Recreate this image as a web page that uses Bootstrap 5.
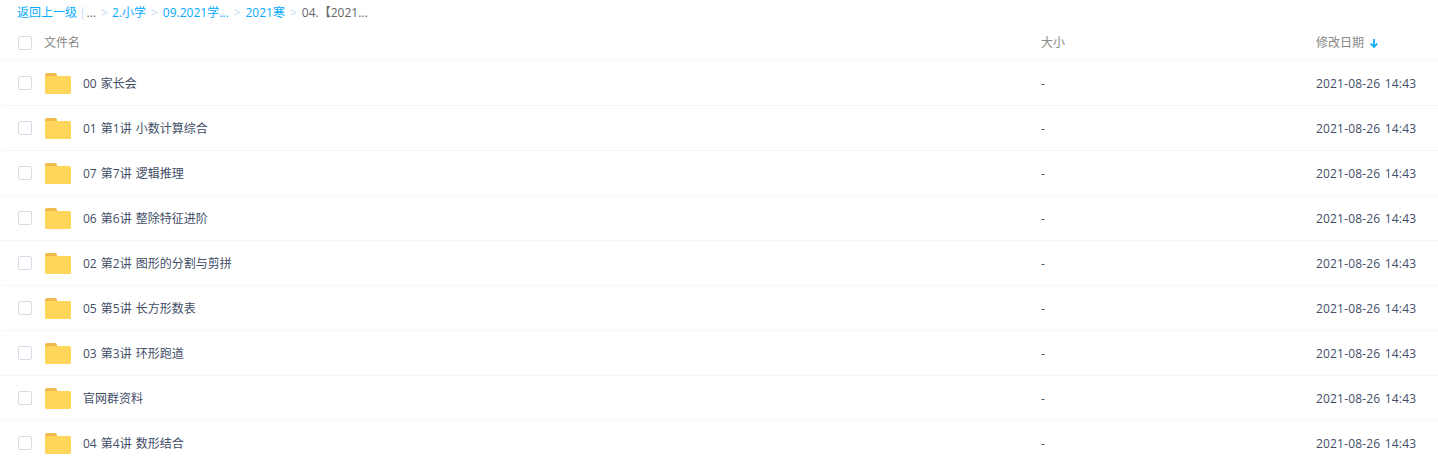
<!DOCTYPE html>
<html lang="zh-CN">
<head>
    <meta charset="UTF-8"/>
    <title>文件列表</title>
    <link rel="stylesheet" href="https://cdn.jsdelivr.net/npm/bootstrap@5.3.0/dist/css/bootstrap.min.css">
    <style>
        body {
            background: #fff;
            font-family: "Open Sans", "Noto Sans CJK SC", sans-serif;
            font-size: 12px;
            color: #424e67;
            overflow: hidden;
        }

        .crumbs {
            height: 25px;
            padding-left: 17px;
            line-height: 26px;
            color: #666;
            white-space: nowrap;
        }

        .crumbs a {
            color: #09aaff;
            text-decoration: none;
        }

        .crumbs .sep {
            color: #c5d8f3;
            margin: 0 5px;
        }

        .crumbs .bar {
            color: #c4d8f4;
            margin: 0 1px 0 2px;
        }

        .crumbs .sep-first {
            margin-right: 4px;
        }

        .file-row {
            height: 45px;
            margin-left: 2px;
            padding-left: 16px;
            border-bottom: 1px solid #f2f6fd;
        }

        .file-head {
            height: 36px;
            color: #888;
        }

        .file-head .name-cell {
            padding-left: 12px;
            width: 1009px;
        }

        .file-head .cell-text {
            padding-top: 0;
        }

        .tick {
            width: 14px;
            height: 14px;
            flex: none;
            border: 1px solid #d5dce6;
            border-radius: 2px;
            background: #fff;
        }

        .name-cell {
            flex: none;
            width: 1009px;
            padding-left: 13px;
        }

        .name-cell svg {
            flex: none;
            margin-top: 1px;
            margin-right: 12px;
        }

        .size-cell {
            flex: none;
            width: 275px;
        }

        .cell-text {
            padding-top: 2px;
            word-spacing: 1px;
        }

        .date-text {
            letter-spacing: .18px;
        }

        .sort-arrow {
            margin-left: 2px;
            margin-top: 1px;
        }
    </style>
</head>
<body>

<div class="crumbs">
    <a href="#">返回上一级</a><span class="bar">|</span>...<span class="sep sep-first">&gt;</span><a href="#">2.小学</a><span class="sep">&gt;</span><a href="#">09.2021学...</a><span class="sep">&gt;</span><a href="#">2021寒</a><span class="sep">&gt;</span>04.【2021...
</div>

<div class="file-row file-head d-flex align-items-center">
    <span class="tick"></span>
    <div class="name-cell cell-text">文件名</div>
    <div class="size-cell cell-text">大小</div>
    <div class="cell-text d-flex align-items-center gap-1">修改日期
        <svg class="sort-arrow" width="8" height="9" viewBox="0 0 8 9"><path d="M4 0V7.5M.8 4.6L4 8L7.2 4.6" fill="none" stroke="#09aaff" stroke-width="1.8"/></svg>
    </div>
</div>

<div id="fileList"></div>

<script>
    const files = [
        '00 家长会',
        '01 第1讲 小数计算综合',
        '07 第7讲 逻辑推理',
        '06 第6讲 整除特征进阶',
        '02 第2讲 图形的分割与剪拼',
        '05 第5讲 长方形数表',
        '03 第3讲 环形跑道',
        '官网群资料',
        '04 第4讲 数形结合'
    ];

    const folderIcon = `<svg width="26" height="21" viewBox="0 0 26 21">
        <path d="M0 2a2 2 0 0 1 2-2h8a2 2 0 0 1 2 2v2H0z" fill="#eeba4b"/>
        <rect y="3" width="26" height="18" rx="1.5" fill="#ffd659"/></svg>`;

    document.getElementById('fileList').innerHTML = files.map(name => `
        <div class="file-row d-flex align-items-center">
            <span class="tick"></span>
            <div class="name-cell d-flex align-items-center">${folderIcon}<span class="cell-text">${name}</span></div>
            <div class="size-cell cell-text">-</div>
            <div class="cell-text date-text">2021-08-26 14:43</div>
        </div>`).join('');
</script>

<script src="https://cdn.jsdelivr.net/npm/bootstrap@5.3.0/dist/js/bootstrap.bundle.min.js"></script>
</body>
</html>
